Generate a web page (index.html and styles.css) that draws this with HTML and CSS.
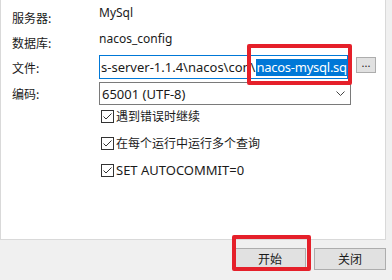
FILE: index.html
```html
<!DOCTYPE html>
<html>
<head>
<meta charset="utf-8">
<link rel="stylesheet" href="styles.css">
</head>
<body>
<div class="panel">
  <div class="form">
    <div class="label r1">服务器:</div>
    <div class="value v1">MySql</div>
    <div class="label r2">数据库:</div>
    <div class="value v2">nacos_config</div>
    <div class="label r3">文件:</div>
    <div class="filerow">
      <div class="input"><span>s-server-1.1.4\nacos\con</span><span class="sel-pre">\</span><span class="sel">nacos-mysql.sq</span></div>
      <div class="browse">...</div>
    </div>
    <div class="label r4">编码:</div>
    <div class="select"><span>65001 (UTF-8)</span>
      <svg class="chev" width="9" height="5" viewBox="0 0 9 5"><polyline points="0.5,0.5 4.5,4.5 8.5,0.5" fill="none" stroke="#444" stroke-width="1"/></svg>
    </div>
    <div class="checks">
      <div class="check"><span class="box"><svg width="11" height="11" viewBox="0 0 11 11"><polyline points="1.5,5.5 4,8 9.5,2.5" fill="none" stroke="#333" stroke-width="1"/></svg></span>遇到错误时继续</div>
      <div class="check"><span class="box"><svg width="11" height="11" viewBox="0 0 11 11"><polyline points="1.5,5.5 4,8 9.5,2.5" fill="none" stroke="#333" stroke-width="1"/></svg></span>在每个运行中运行多个查询</div>
      <div class="check latin"><span class="box"><svg width="11" height="11" viewBox="0 0 11 11"><polyline points="1.5,5.5 4,8 9.5,2.5" fill="none" stroke="#333" stroke-width="1"/></svg></span>SET AUTOCOMMIT=0</div>
    </div>
  </div>
</div>
<div class="footer">
  <div class="btn">开始</div>
  <div class="btn">关闭</div>
</div>
<div class="mark mark-file"></div>
<div class="mark mark-start"></div>
</body>
</html>
```

FILE: styles.css
```css
html, body {
  margin: 0;
  padding: 0;
}
body {
  background: #f0f0f0;
  width: 392px;
  height: 280px;
  overflow: hidden;
  position: relative;
  font-family: "Noto Sans", "Noto Sans CJK SC", sans-serif;
  font-size: 12px;
  color: #1a1a1a;
}
.panel {
  box-sizing: border-box;
  width: 386px;
  height: 240px;
  background: #fff;
  border-left: 1px solid #d9d9d9;
  border-right: 1px solid #d9d9d9;
  border-bottom: 1px solid #d9d9d9;
  padding: 5px 0 0 11px;
}
.form {
  display: grid;
  grid-template-columns: 87px 252px;
  grid-template-rows: 25px 25px 27px 23px auto;
}
.label {
  font-family: "Noto Sans CJK SC", sans-serif;
  line-height: 16px;
  align-self: center;
}
.r3 { align-self: start; margin-top: 5px; }
.r4 { align-self: start; margin-top: 4px; }
.value {
  line-height: 16px;
  align-self: start;
}
.v1 { margin-top: 0px; }
.v2 { margin-top: 1px; }
.filerow {
  display: flex;
  align-items: flex-start;
  gap: 8px;
  width: 277px;
}
.input {
  box-sizing: border-box;
  width: 249px;
  height: 24px;
  border: 1px solid #0078d7;
  padding: 0 0 0 1px;
  display: flex;
  align-items: center;
  white-space: nowrap;
  overflow: hidden;
  font-size: 13px;
  line-height: 17px;
}
.sel-pre {
  padding-right: 1px;
}
.sel {
  background: #0078d7;
  color: #fff;
  letter-spacing: -0.25px;
}
.browse {
  box-sizing: border-box;
  width: 20px;
  height: 16px;
  margin-top: 2px;
  background: #e1e1e1;
  border: 1px solid #adadad;
  font-size: 11px;
  line-height: 10px;
  text-align: center;
  flex: none;
}
.select {
  box-sizing: border-box;
  width: 252px;
  height: 23px;
  border: 1px solid #7a7a7a;
  display: flex;
  align-items: center;
  justify-content: space-between;
  padding: 0 5px 0 2px;
  font-size: 13px;
  line-height: 16px;
}
.chev { display: block; }
.checks {
  grid-column: 2;
  display: flex;
  flex-direction: column;
  gap: 11px;
  padding-top: 3px;
}
.check {
  display: flex;
  align-items: center;
  gap: 2px;
  height: 16px;
  margin-left: 2px;
  font-family: "Noto Sans CJK SC", sans-serif;
  line-height: 16px;
}
.check.latin {
  font-family: "Noto Sans", sans-serif;
  font-size: 13px;
}
.box {
  box-sizing: border-box;
  width: 13px;
  height: 13px;
  border: 1px solid #333;
  background: #fff;
  display: flex;
  flex: none;
}
.box svg { display: block; }
.footer {
  display: flex;
  justify-content: flex-end;
  gap: 8px;
  padding: 8px 6px 0 0;
}
.btn {
  box-sizing: border-box;
  width: 72px;
  height: 22px;
  background: #e1e1e1;
  border: 1px solid #adadad;
  font-family: "Noto Sans CJK SC", sans-serif;
  text-align: center;
  line-height: 20px;
}
.mark {
  position: absolute;
  box-sizing: border-box;
  border: 4px solid #e5202a;
  border-radius: 2px;
}
.mark-file {
  left: 247px;
  top: 44px;
  width: 105px;
  height: 41px;
}
.mark-start {
  left: 232px;
  top: 235px;
  width: 79px;
  height: 36px;
}
```
